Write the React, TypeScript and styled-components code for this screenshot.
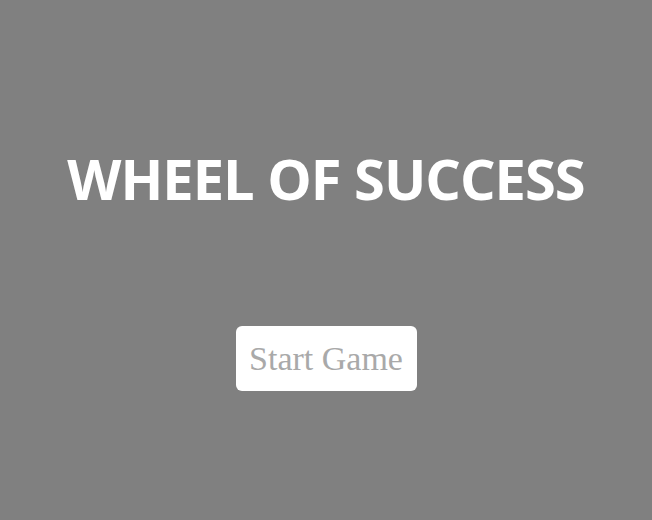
import React from "react";
import styled, { createGlobalStyle } from "styled-components";

const Global = createGlobalStyle`
  html, body { margin: 0; padding: 0; background: #808080; }
  body { width: 652px; height: 520px; overflow: hidden; }
`;

const Screen = styled.div`
  width: 652px;
  height: 520px;
  background: #808080;
  display: flex;
  flex-direction: column;
  align-items: center;
`;

const Title = styled.h1`
  margin: 145px 0 0;
  font-family: "Open Sans", sans-serif;
  font-weight: 700;
  font-size: 56px;
  line-height: 66px;
  color: #ffffff;
  letter-spacing: -1px;
`;

const StartButton = styled.button`
  margin-top: 115px;
  width: 181px;
  height: 65px;
  border: none;
  border-radius: 6px;
  background: #ffffff;
  color: #a9a9a9;
  font-family: "Liberation Serif", serif;
  font-size: 34px;
  padding: 0;
  cursor: pointer;
`;

export default function App() {
  return (
    <>
      <Global />
      <Screen>
        <Title>WHEEL OF SUCCESS</Title>
        <StartButton>Start Game</StartButton>
      </Screen>
    </>
  );
}
